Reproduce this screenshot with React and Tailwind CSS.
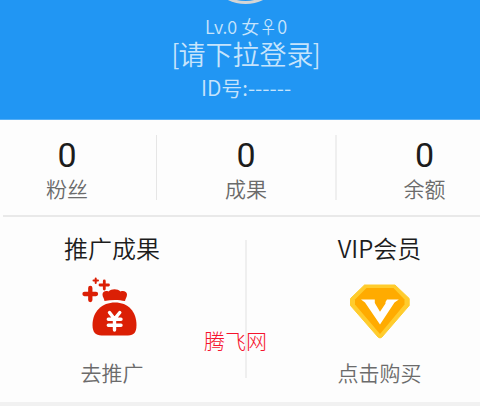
import React from "react";

const stats = [
    { label: "粉丝", value: 0, className: "w-[156px] pr-[22px]" },
    { label: "成果", value: 0, className: "w-[178px]" },
    { label: "余额", value: 0, className: "flex-1 pl-[32px]" },
];

const MoneyBagIcon = () => (
    <svg width="56" height="60" viewBox="0 0 56 60" fill="#db1f05" className="block">
        {/* Sparkles */}
        <g stroke="#db1f05" strokeLinecap="round" fill="none">
            <path d="M2.500 17H14M8.300 11V23" strokeWidth="4.300" />
            <path d="M18 8H26.500M22.300 4V12" strokeWidth="2.800" />
            <path d="M11.500 3.500H16M13.700 1.500V6" strokeWidth="2" />
        </g>
        {/* Bag */}
        <path d="M20.500 17.500c0-3 3-4.200 6-3c3-3 9-3 12 0c3-1.200 6.500 0 6.500 3c0 2.500-1.500 4-2 6.500c-6-1.500-14-1.500-20.500 0c-.5-3-2-4-2-6.500z" />
        <path d="M33 25.500c13 0 21.500 9 21.500 22.500c0 7-2.500 10.500-8.500 10.500H19.500c-6 0-9-3.500-9-10.500c0-13.500 9.500-22.500 22.500-22.500z" />
        <path d="M27.500 35.500L32.500 42L37.800 35.500M26.300 42.300H39M26.300 48.300H39M32.500 42V53" stroke="#fff" strokeWidth="3.400" strokeLinecap="round" fill="none" />
    </svg>
);

const VipIcon = () => (
    <svg width="62" height="56" viewBox="0 0 62 56" className="block">
        <path d="M15.500 1H46L60.200 14.500V21.500L33 53Q31 55 29 53L1.500 21.500V14.500Z" fill="#ffcc2d" stroke="#ffcc2d" strokeLinejoin="round" />
        <path d="M17.500 4H44.500L55.500 15.500V20.500L31 50L6 20.500V15.500Z" fill="#ffab00" />
        <path d="M12 15.500H25.800V19L31 27.800L36.500 19.500V18L38 15.500H49.800L45.500 18.500L31 40.500L16 18.500Z" fill="#fff" />
    </svg>
);

const App = () => {
    return (
        <div className="relative h-[406px] w-[480px] overflow-hidden bg-[#fdfdfd] font-['Noto_Sans_CJK_SC',sans-serif] font-[350]">
            {/* Profile header */}
            <header className="relative flex h-[120px] flex-col items-center overflow-hidden border-b border-[#55aef5] bg-[#2196f3] pt-[14px] pl-[12px] text-[#c6e4fc]">
                <div className="absolute -top-[75px] left-[206px] size-[79px] rounded-full border-[3px] border-[#d5d5d5]"></div>
                <div className="h-[24px] text-[18px] leading-[24px] whitespace-nowrap">Lv.0 女♀0</div>
                <div className="h-[34px] font-['Roboto','Noto_Sans_CJK_SC',sans-serif] text-[27px] leading-[37px] whitespace-nowrap">[请下拉登录]</div>
                <div className="h-[30px] text-[21px] leading-[30px] whitespace-nowrap">ID号:------</div>
            </header>

            {/* Counters */}
            <section className="flex h-[95px] pt-[15px]">
                {stats.map((stat, i) => (
                    <React.Fragment key={stat.label}>
                        {i > 0 && <div className={i === 1 ? "h-[65px] w-px bg-[#e6e6e6]" : "h-[65px] w-[2px] bg-[#efefef]"}></div>}
                        <div className={`flex flex-col items-center ${stat.className}`}>
                            <div className="h-[39px] font-['Roboto',sans-serif] text-[34px] leading-[40px] font-normal text-[#1c1c1c]">{stat.value}</div>
                            <div className="text-[21px] leading-[28px] text-[#6b6b6b]">{stat.label}</div>
                        </div>
                    </React.Fragment>
                ))}
            </section>
            <div className="ml-[3px] h-[2px] bg-[#e9e9e9]"></div>

            {/* Entry cards */}
            <section className="flex h-[185px] text-center">
                <div className="flex w-[245px] flex-col items-center pt-[15px] pr-[21px]">
                    <h2 className="h-[32px] text-[24px] leading-[32px] font-[350] text-[#1c1c1c]">推广成果</h2>
                    <div className="mt-[13px] h-[60px] pr-[5px]">
                        <MoneyBagIcon />
                    </div>
                    <div className="mt-[21px] text-[21px] leading-[28px] text-[#6b6b6b]">去推广</div>
                </div>
                <div className="mt-[23px] h-[138px] w-[2px] bg-[#efefef]"></div>
                <div className="flex flex-1 flex-col items-center pt-[15px] pl-[32px]">
                    <h2 className="h-[32px] text-[24px] leading-[32px] font-[350] text-[#1c1c1c]">VIP会员</h2>
                    <div className="mt-[20px] h-[56px]">
                        <VipIcon />
                    </div>
                    <div className="mt-[18px] text-[21px] leading-[28px] text-[#6b6b6b]">点击购买</div>
                </div>
            </section>
            <div className="h-[4px] bg-[#f1f1f1]"></div>

            {/* Site stamp over the cards */}
            <div className="absolute top-[326px] left-[204px] text-[21px] leading-[28px] font-light text-[#f5142d]">腾飞网</div>
        </div>
    );
};

export default App;
